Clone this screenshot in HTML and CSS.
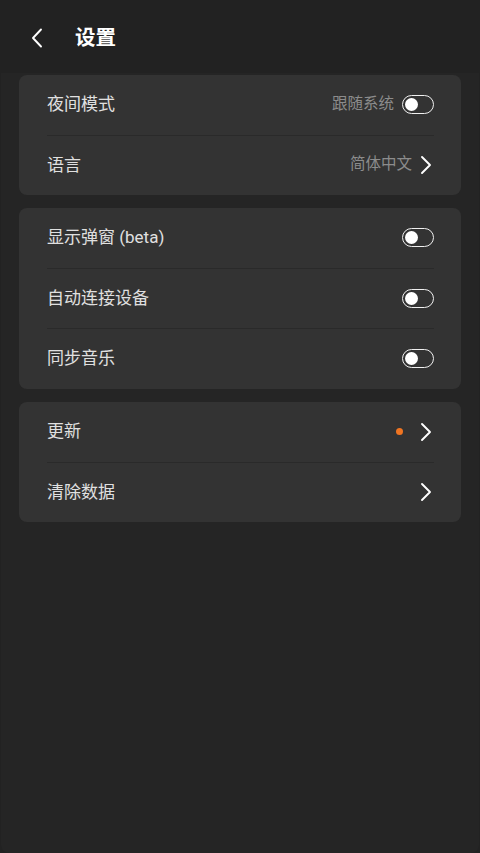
FILE: index.html
```html
<!DOCTYPE html>
<html lang="zh-CN">
<head>
<meta charset="utf-8">
<meta name="viewport" content="width=480">
<title>设置</title>
<link rel="stylesheet" href="styles.css">
</head>
<body>
<header class="header">
  <svg class="back" width="12" height="20" viewBox="0 0 12 20"><path d="M10 1.5 L2 10 L10 18.5" fill="none" stroke="#ffffff" stroke-width="1.9" stroke-linecap="round" stroke-linejoin="round"/></svg>
  <h1 class="title">设置</h1>
</header>
<main class="panel">
  <section class="card">
    <div class="row">
      <span class="label">夜间模式</span>
      <span class="right"><span class="value">跟随系统</span><span class="toggle"><span class="knob"></span></span></span>
    </div>
    <div class="row">
      <span class="label">语言</span>
      <span class="right"><span class="value">简体中文</span><svg class="chev" width="16" height="20" viewBox="0 0 16 20"><path d="M4 2 L12 10 L4 18" fill="none" stroke="#ffffff" stroke-width="1.9" stroke-linecap="round" stroke-linejoin="round"/></svg></span>
    </div>
  </section>
  <section class="card">
    <div class="row">
      <span class="label">显示弹窗 (beta)</span>
      <span class="right"><span class="toggle"><span class="knob"></span></span></span>
    </div>
    <div class="row">
      <span class="label">自动连接设备</span>
      <span class="right"><span class="toggle"><span class="knob"></span></span></span>
    </div>
    <div class="row">
      <span class="label">同步音乐</span>
      <span class="right"><span class="toggle"><span class="knob"></span></span></span>
    </div>
  </section>
  <section class="card">
    <div class="row">
      <span class="label">更新</span>
      <span class="right"><span class="dot"></span><svg class="chev" width="16" height="20" viewBox="0 0 16 20"><path d="M4 2 L12 10 L4 18" fill="none" stroke="#ffffff" stroke-width="1.9" stroke-linecap="round" stroke-linejoin="round"/></svg></span>
    </div>
    <div class="row">
      <span class="label">清除数据</span>
      <span class="right"><svg class="chev" width="16" height="20" viewBox="0 0 16 20"><path d="M4 2 L12 10 L4 18" fill="none" stroke="#ffffff" stroke-width="1.9" stroke-linecap="round" stroke-linejoin="round"/></svg></span>
    </div>
  </section>
</main>
</body>
</html>
```
FILE: styles.css
```css
* { box-sizing: border-box; }
html, body { margin: 0; padding: 0; }
body {
  width: 480px;
  height: 853px;
  overflow: hidden;
  background: #222222;
  font-family: Roboto, "Noto Sans CJK SC", sans-serif;
  color: #e8e8e8;
  display: flex;
  flex-direction: column;
}
.header {
  height: 73px;
  flex: none;
  display: flex;
  align-items: center;
  padding-left: 31px;
  padding-top: 4px;
}
.back { display: block; flex: none; margin-top: -2px; }
.title {
  margin: 0 0 0 32px;
  font-size: 20.5px;
  font-weight: 700;
  color: #ffffff;
  line-height: 1;
}
.panel {
  flex: 1;
  margin: 0 1px;
  background: #252525;
  border-radius: 0 0 8px 8px;
  padding: 2px 18px 0;
  display: flex;
  flex-direction: column;
  gap: 13px;
}
.card {
  background: #333333;
  border-radius: 8px;
  padding: 0 27px 0 28px;
}
.card:nth-child(2) { padding-bottom: 1px; }
.row {
  height: 60px;
  display: flex;
  align-items: center;
  justify-content: space-between;
  border-top: 1px solid #2a2a2a;
  padding-bottom: 1px;
}
.row:first-child { border-top: none; }
.label {
  font-size: 17px;
  color: #e0e0e0;
  line-height: 1;
}
.right {
  display: flex;
  align-items: center;
}
.value {
  font-size: 15.5px;
  color: #8c8c8c;
  margin-right: 8px;
  line-height: 1;
}
.toggle {
  width: 32px;
  height: 19px;
  border: 1.5px solid #f0f0f0;
  border-radius: 10px;
  display: flex;
  align-items: center;
  padding-left: 1.5px;
}
.knob {
  width: 13px;
  height: 13px;
  border-radius: 50%;
  background: #ffffff;
}
.chev { display: block; }
.value + .chev { margin-left: -2px; }
.dot {
  width: 7px;
  height: 7px;
  border-radius: 50%;
  background: #f07522;
  margin-right: 15px;
}
```
